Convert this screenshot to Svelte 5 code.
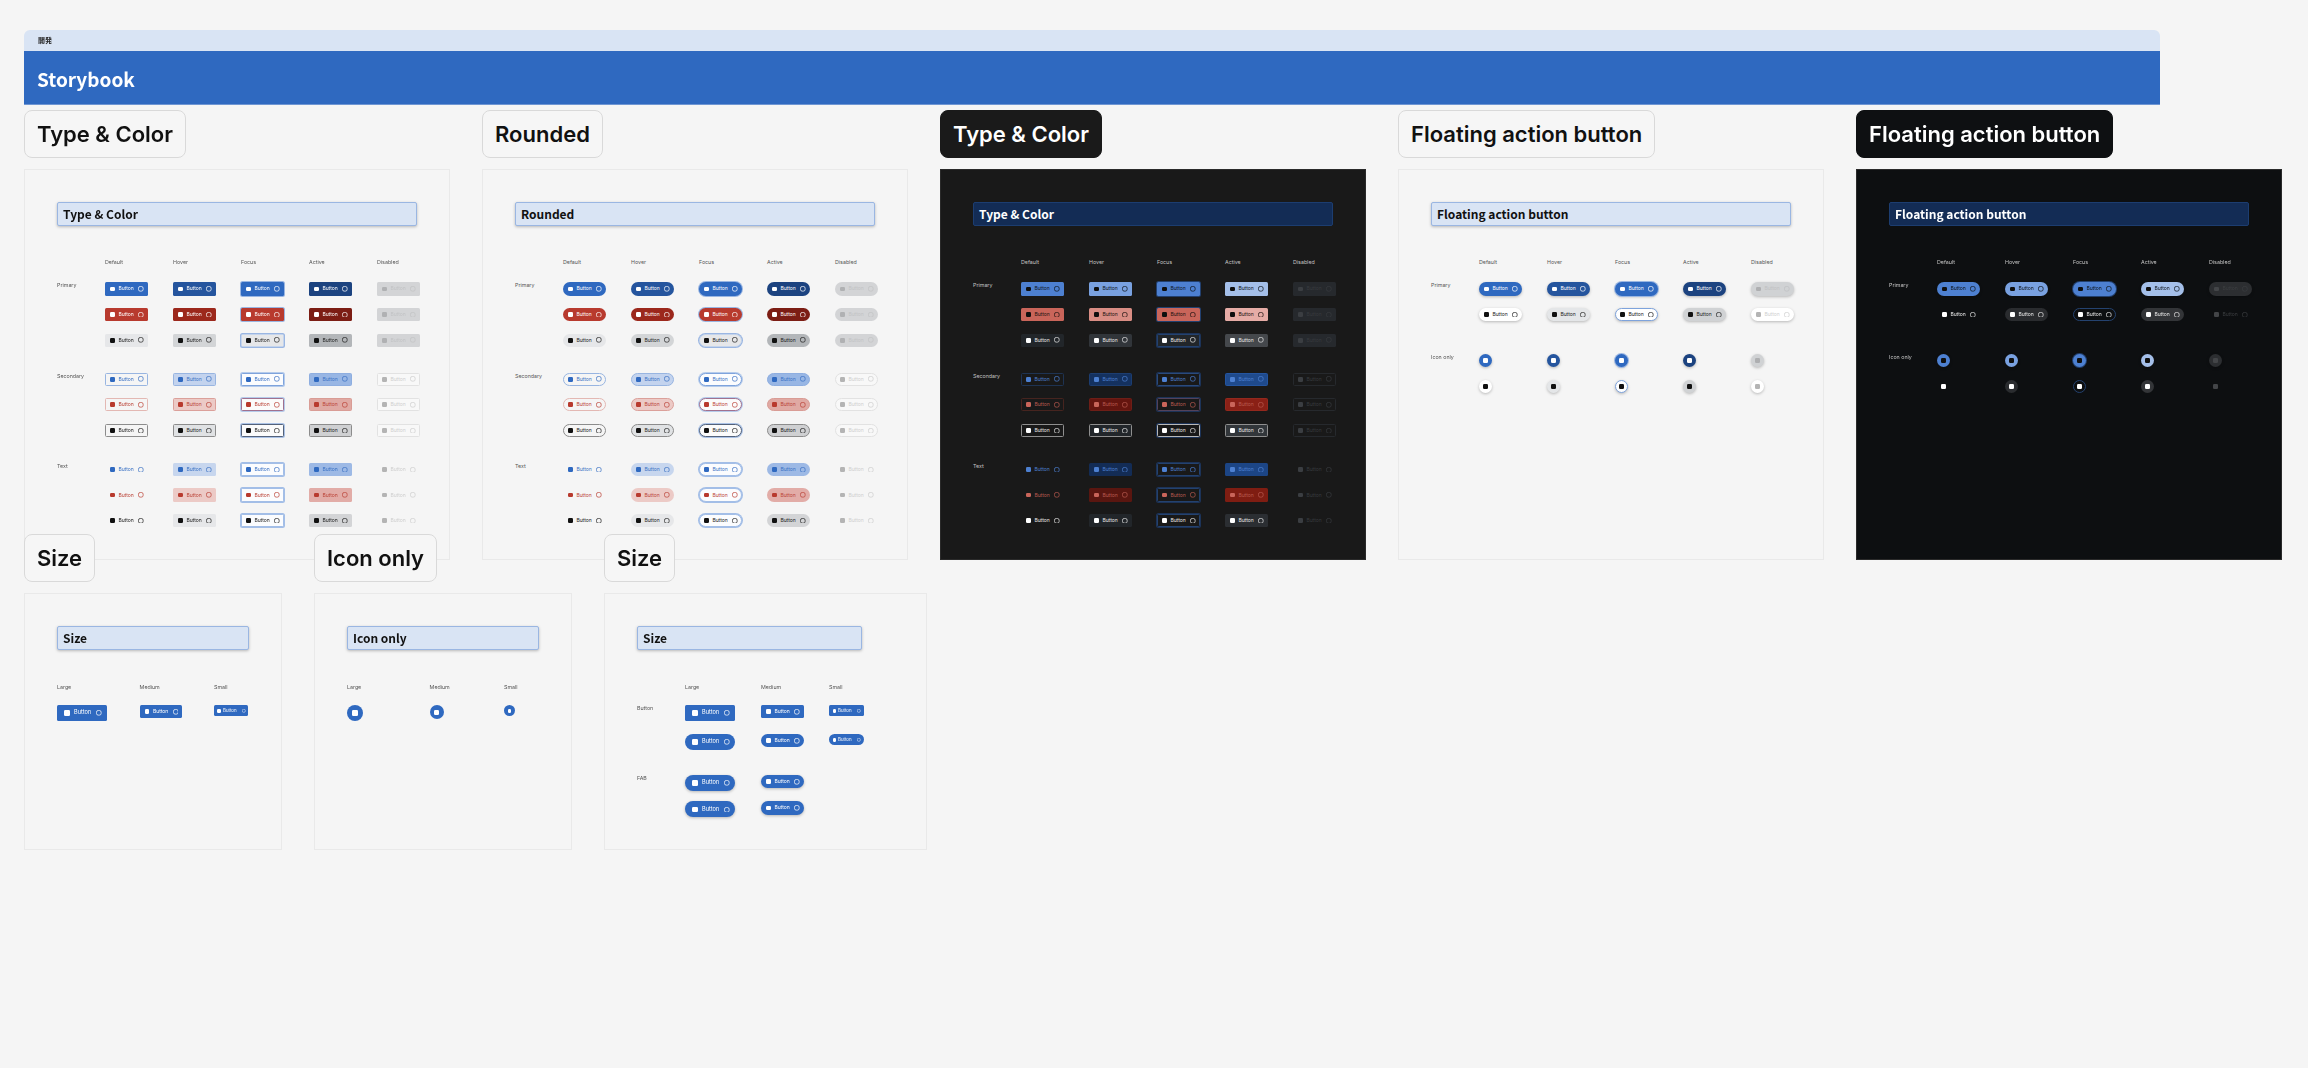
<script>
  const states = ["default", "hover", "focus", "active", "disabled"];
  const labels = { default: "Default", hover: "Hover", focus: "Focus", active: "Active", disabled: "Disabled" };

  const matrixRows = [
    { label: "Primary", kind: "solid-blue", start: true },
    { kind: "solid-red" },
    { kind: "solid-gray" },
    { label: "Secondary", kind: "line-blue", start: true },
    { kind: "line-red" },
    { kind: "line-gray" },
    { label: "Text", kind: "text-blue", start: true },
    { kind: "text-red" },
    { kind: "text-gray" },
  ];

  const fabRows = [
    { label: "Primary", kind: "fab-blue fab", start: true },
    { kind: "fab-white fab" },
    { label: "Icon only", kind: "fab-blue fab", icon: true, wide: true },
    { kind: "fab-white fab", icon: true },
  ];

  const boards = [
    { name: "Type & Color", rows: matrixRows, theme: "" },
    { name: "Rounded", rows: matrixRows, theme: "round" },
    { name: "Type & Color", rows: matrixRows, theme: "dark" },
    { name: "Floating action button", rows: fabRows, theme: "" },
    { name: "Floating action button", rows: fabRows, theme: "dark ink" },
  ];

  const sizes = ["Large", "Medium", "Small"];
</script>

{#snippet sample(kind, state, size = "md", icon = false)}
  {#if icon}
    <span class="btn icon {kind} {state} {size}"><i class="lead"></i></span>
  {:else}
    <span class="btn {kind} {state} {size}">
      <i class="lead"></i>
      <span>Button</span>
      <svg class="trail" viewBox="0 0 6 6"><rect x="0.5" y="0.5" width="5" height="5" rx="1.9" /></svg>
    </span>
  {/if}
{/snippet}

{#snippet heading(text)}
  <div class="title"><span>{text}</span></div>
{/snippet}

<div class="page">
  <header class="head">
    <div class="head__top">開発</div>
    <div class="head__main">Storybook</div>
  </header>

  <div class="row">
    {#each boards as board}
      <section class="col {board.theme}">
        <h2 class="tag">{board.name}</h2>
        <div class="frame">
          {@render heading(board.name)}
          <div class="matrix">
            <span></span>
            {#each states as state}
              <span class="label head-label">{labels[state]}</span>
            {/each}
            {#each board.rows as row, i}
              <span class="label row-label" class:start={row.start && i > 0} class:wide={row.wide}>{row.label ?? ""}</span>
              {#each states as state}
                <div class="cell" class:start={row.start && i > 0} class:wide={row.wide}>
                  {@render sample(row.kind, state, "md", row.icon)}
                </div>
              {/each}
            {/each}
          </div>
        </div>
      </section>
    {/each}
  </div>

  <div class="row row--second">
    <section class="col">
      <h2 class="tag">Size</h2>
      <div class="frame frame--small">
        {@render heading("Size")}
        <div class="sizes">
          {#each sizes as size}
            <span class="label size-label">{size}</span>
          {/each}
          {@render sample("solid-blue", "default", "lg")}
          {@render sample("solid-blue", "default", "md")}
          {@render sample("solid-blue", "default", "sm")}
        </div>
      </div>
    </section>

    <section class="col">
      <h2 class="tag">Icon only</h2>
      <div class="frame frame--small">
        {@render heading("Icon only")}
        <div class="sizes">
          {#each sizes as size}
            <span class="label size-label">{size}</span>
          {/each}
          {@render sample("solid-blue round-icon", "default", "lg", true)}
          {@render sample("solid-blue round-icon", "default", "md", true)}
          {@render sample("solid-blue round-icon", "default", "sm", true)}
        </div>
      </div>
    </section>

    <section class="col">
      <h2 class="tag">Size</h2>
      <div class="frame frame--wide">
        {@render heading("Size")}
        <div class="size-table">
          <span></span>
          {#each sizes as size}
            <span class="label size-label">{size}</span>
          {/each}

          <span class="label">Button</span>
          {@render sample("solid-blue", "default", "lg")}
          {@render sample("solid-blue", "default", "md")}
          {@render sample("solid-blue", "default", "sm")}

          <span></span>
          {@render sample("solid-blue pill", "default", "lg")}
          {@render sample("solid-blue pill", "default", "md")}
          {@render sample("solid-blue pill", "default", "sm")}

          <span class="label fab-start">FAB</span>
          <div class="cell fab-start">{@render sample("fab-blue fab", "default", "lg")}</div>
          <div class="cell fab-start">{@render sample("fab-blue fab", "default", "md")}</div>
          <span class="fab-start"></span>

          <span></span>
          {@render sample("fab-blue fab", "default", "lg")}
          {@render sample("fab-blue fab", "default", "md")}
          <span></span>
        </div>
      </div>
    </section>
  </div>
</div>

<style>
  :global(body) {
    background: #f5f5f5;
  }

  .page {
    padding: 30px 0 0 24px;
    font-family: Inter, "Noto Sans", sans-serif;
    filter: blur(0.35px);
  }

  .head {
    width: 2136px;
    font-family: "Noto Sans CJK JP", sans-serif;
  }

  .head__top {
    height: 21px;
    padding-left: 14px;
    background: #d9e4f4;
    border-radius: 6px 6px 0 0;
    font-size: 7px;
    font-weight: 700;
    line-height: 21px;
    color: #222;
  }

  .head__main {
    height: 53px;
    padding-left: 13px;
    background: #2f69c0;
    border-bottom: 1px solid #6f96d3;
    font-size: 19px;
    font-weight: 700;
    line-height: 55px;
    color: #fff;
  }

  .row {
    display: flex;
    gap: 32px;
    align-items: stretch;
    margin-top: 5px;
  }

  /* the second row's tags sit over the bottom edge of the first row */
  .row--second {
    margin-top: -26.5px;
  }

  .col {
    display: flex;
    flex-direction: column;
    align-items: flex-start;
  }

  .tag {
    margin: 0 0 11px;
    padding: 0 12px;
    height: 48px;
    box-sizing: border-box;
    background: #f6f6f6;
    border: 1px solid #d9d9d9;
    border-radius: 8px;
    font-size: 22px;
    font-weight: 600;
    line-height: 46px;
    color: #111;
  }

  .frame {
    flex: 1;
    width: 426px;
    box-sizing: border-box;
    padding: 32px;
    background: #f5f5f5;
    border: 1px solid #e9e9e9;
  }

  .frame--small {
    width: 258px;
  }

  .frame--wide {
    width: 323px;
    padding-right: 64px;
  }

  .title {
    height: 24px;
    box-sizing: border-box;
    padding-left: 5px;
    background: #d9e4f4;
    border: 1px solid #9ab6e2;
    border-radius: 2px;
    box-shadow: 0 1px 3px rgba(0, 0, 0, 0.25);
    font-family: "Noto Sans CJK JP", sans-serif;
    font-size: 12px;
    font-weight: 700;
    line-height: 21px;
    color: #111;
  }

  .label {
    font-size: 5.3px;
    line-height: 7px;
    color: #555;
    white-space: nowrap;
  }

  .matrix {
    display: grid;
    grid-template-columns: 48px repeat(4, 68px) auto;
    row-gap: 12.4px;
    margin-top: 33px;
    justify-items: start;
  }

  .head-label {
    margin-bottom: 4px;
  }

  .cell {
    display: flex;
    height: 13.2px;
  }

  .start {
    margin-top: 13.5px;
  }

  .wide {
    margin-top: 20.4px;
  }

  .sizes {
    display: grid;
    grid-template-columns: 82.6px 74.4px auto;
    row-gap: 13px;
    margin-top: 34px;
    justify-items: start;
    align-items: start;
  }

  .size-table {
    display: grid;
    grid-template-columns: 48px 76px 68px auto;
    row-gap: 13px;
    margin-top: 34px;
    justify-items: start;
    align-items: start;
  }

  .size-label {
    margin-bottom: 1.5px;
  }

  .fab-start {
    margin-top: 12px;
  }

  /* button */
  .btn {
    display: inline-flex;
    align-items: center;
    box-sizing: border-box;
    height: 13.2px;
    width: 42.5px;
    padding: 0 4px 0 5px;
    gap: 3.6px;
    background: var(--bg, transparent);
    color: var(--fg);
    border: 1px solid var(--bd, transparent);
    border-radius: 1.5px;
    font-size: 5px;
    line-height: 1;
    box-shadow: var(--sh, none);
    white-space: nowrap;
  }

  .btn > span {
    flex: 1;
  }

  .lead {
    flex: none;
    width: 4.8px;
    height: 4.8px;
    margin-left: -1px;
    border-radius: 1.2px;
    background: var(--ic, var(--fg));
  }

  .trail {
    flex: none;
    width: 5.6px;
    height: 5.6px;
    margin-right: -1px;
    fill: none;
    stroke: var(--fg);
    stroke-width: 0.8;
  }

  .round .btn,
  .pill,
  .fab {
    border-radius: 99px;
  }

  .lg {
    height: 16px;
    width: 50px;
    padding: 0 5px 0 7px;
    gap: 4.4px;
    font-size: 5.6px;
  }

  .lg .lead,
  .lg .trail {
    width: 5.6px;
    height: 5.6px;
  }

  .sm {
    height: 11px;
    width: 34.5px;
    padding: 0 2.5px 0 3.5px;
    gap: 2px;
    font-size: 4.4px;
  }

  .sm .lead,
  .sm .trail {
    width: 3.6px;
    height: 3.6px;
  }

  .icon {
    width: 13.2px;
    padding: 0;
    justify-content: center;
    border-radius: 50%;
  }

  .icon .lead {
    margin: 0;
  }

  .round-icon {
    border-radius: 50%;
  }

  .icon.lg {
    width: 16px;
    padding: 0;
  }

  .icon.md {
    width: 13.2px;
  }

  .icon.sm {
    width: 11px;
    padding: 0;
  }

  .sizes .icon.md {
    width: 14px;
    height: 14px;
  }

  /* light theme */
  .solid-blue { --bg: #2f69c0; --fg: #fff; }
  .solid-blue.hover { --bg: #25559e; }
  .solid-blue.focus { --sh: 0 0 0 1px #9ab6e2; }
  .solid-blue.active { --bg: #1c4380; }

  .solid-red { --bg: #b83a2e; --fg: #fff; }
  .solid-red.hover { --bg: #9c281c; }
  .solid-red.focus { --sh: 0 0 0 1px #9ab6e2; }
  .solid-red.active { --bg: #7c1d14; }

  .solid-gray { --bg: #e6e7e9; --fg: #222; --ic: #111; }
  .solid-gray.hover { --bg: #d3d5d7; }
  .solid-gray.focus { --sh: 0 0 0 1px #9ab6e2; --bd: #c4d4ec; }
  .solid-gray.active { --bg: #b3b6b9; }

  .line-blue { --bd: #98b5e1; --fg: #3b72c4; --ic: #2f69c0; }
  .line-blue.hover { --bg: #c3d3ee; }
  .line-blue.focus { --bg: #fbfcfe; --bd: #7ea3dc; --sh: 0 0 0 1px #b5cbeb; }
  .line-blue.active { --bg: #98b6e4; --bd: #8eaee0; }

  .line-red { --bd: #e3b8b3; --fg: #bb4438; --ic: #b83a2e; }
  .line-red.hover { --bg: #eccac6; --bd: #dba09a; }
  .line-red.focus { --bg: #fbfbfb; --bd: #a0718f; --sh: 0 0 0 1px #b5cbeb; }
  .line-red.active { --bg: #e0a9a3; --bd: #d99c95; }

  .line-gray { --bd: #8c8c8c; --fg: #222; --ic: #111; }
  .line-gray.hover { --bg: #e0e2e4; }
  .line-gray.focus { --bg: #fbfbfb; --bd: #54627a; --sh: 0 0 0 1px #aac2e6; }
  .line-gray.active { --bg: #cfd0d2; }

  .text-blue { --fg: #3b72c4; --ic: #2f69c0; }
  .text-blue.hover { --bg: #c7d6ee; }
  .text-blue.active { --bg: #9db9e5; }

  .text-red { --fg: #bb4438; --ic: #b83a2e; }
  .text-red.hover { --bg: #eccac6; }
  .text-red.active { --bg: #e2aca7; }

  .text-gray { --fg: #222; --ic: #111; }
  .text-gray.hover { --bg: #e6e7e9; }
  .text-gray.active { --bg: #d3d4d6; }

  .text-blue.focus,
  .text-red.focus,
  .text-gray.focus {
    --bg: #fbfcfe;
    --bd: #a3bee7;
    --sh: 0 0 0 1px #a3bee7;
  }

  .fab {
    --sh: 0 1px 3px rgba(0, 0, 0, 0.25);
  }

  .fab-blue { --bg: #2f69c0; --fg: #fff; }
  .fab-blue.hover { --bg: #25559e; }
  .fab-blue.focus { --sh: 0 0 0 1px #9ab6e2, 0 1px 3px rgba(0, 0, 0, 0.25); }
  .fab-blue.active { --bg: #1c4380; }

  .fab-white { --bg: #fff; --fg: #222; --ic: #111; }
  .fab-white.hover { --bg: #e4e6e8; }
  .fab-white.focus { --bd: #7ea3dc; }
  .fab-white.active { --bg: #d0d2d4; }

  .disabled[class*="solid-"] { --bg: #d3d4d6; --fg: #c2c3c5; --ic: #b0b1b3; }
  .disabled[class*="line-"] { --bg: #f8f8f8; --bd: #e2e2e2; --fg: #cfcfcf; --ic: #b4b4b4; }
  .disabled[class*="text-"] { --fg: #cfcfcf; --ic: #b4b4b4; }
  .disabled.fab-blue { --bg: #d0d2d4; --fg: #c0c1c3; --ic: #aeafb1; }
  .disabled.fab-white { --fg: #cfcfcf; --ic: #b4b4b4; }

  /* dark theme */
  .dark .tag {
    background: #1a1a1a;
    border-color: #1a1a1a;
    color: #fff;
  }

  .dark .frame {
    background: #191919;
    border-color: #2a2a2a;
  }

  .dark .title {
    background: #132c55;
    border-color: #1c3d70;
    box-shadow: none;
    color: #fff;
  }

  .dark .label {
    color: #c4c4c4;
  }

  .ink .tag {
    background: #0e1012;
    border-color: #0e1012;
  }

  .ink .frame {
    background: #0d0f11;
  }

  .dark .solid-blue { --bg: #4d80d1; --fg: #10151c; --ic: #0f0f0f; }
  .dark .solid-blue.hover { --bg: #79a1e0; }
  .dark .solid-blue.focus { --sh: 0 0 0 1px #22406f; }
  .dark .solid-blue.active { --bg: #a4bfe9; }

  .dark .solid-red { --bg: #c9655a; --fg: #1c1210; --ic: #0f0f0f; }
  .dark .solid-red.hover { --bg: #d98d84; }
  .dark .solid-red.focus { --sh: 0 0 0 1px #22406f; }
  .dark .solid-red.active { --bg: #e6aca6; }

  .dark .solid-gray { --bg: #22262a; --fg: #e8e8e8; --ic: #fff; }
  .dark .solid-gray.hover { --bg: #31353a; }
  .dark .solid-gray.focus { --bg: #22262a; --bd: #24426f; --sh: 0 0 0 1px #1c3358; }
  .dark .solid-gray.active { --bg: #45484c; }

  .dark .line-blue { --bd: #1e3352; --fg: #4d80d1; --ic: #4d80d1; }
  .dark .line-blue.hover { --bg: #14315f; --bd: #1c3d70; }
  .dark .line-blue.focus { --bg: transparent; --bd: #2a4a7c; --sh: 0 0 0 1px #1c3358; }
  .dark .line-blue.active { --bg: #1f4a8c; --bd: #2455a0; }

  .dark .line-red { --bd: #46241f; --fg: #b85a50; --ic: #c9655a; }
  .dark .line-red.hover { --bg: #65150f; --bd: #6e1e17; }
  .dark .line-red.focus { --bg: transparent; --bd: #54425a; --sh: 0 0 0 1px #1c3358; }
  .dark .line-red.active { --bg: #8a2016; --bd: #94281d; }

  .dark .line-gray { --bd: #8f8f8f; --fg: #e8e8e8; --ic: #fff; }
  .dark .line-gray.hover { --bg: #22262a; }
  .dark .line-gray.focus { --bg: transparent; --bd: #b8b8b8; --sh: 0 0 0 1px #1c3358; }
  .dark .line-gray.active { --bg: #32363a; }

  .dark .text-blue { --fg: #4d80d1; --ic: #4d80d1; }
  .dark .text-blue.hover { --bg: #132c55; }
  .dark .text-blue.active { --bg: #1c4585; }

  .dark .text-red { --fg: #b85a50; --ic: #c9655a; }
  .dark .text-red.hover { --bg: #5a1610; }
  .dark .text-red.active { --bg: #7f1d12; }

  .dark .text-gray { --fg: #e8e8e8; --ic: #fff; }
  .dark .text-gray.hover { --bg: #22262a; }
  .dark .text-gray.active { --bg: #2b2e32; }

  .dark .text-blue.focus,
  .dark .text-red.focus,
  .dark .text-gray.focus {
    --bg: transparent;
    --bd: #24426f;
    --sh: 0 0 0 1px #1c3358;
  }

  .dark .fab-blue { --bg: #4d80d1; --fg: #10151c; --ic: #0f0f0f; }
  .dark .fab-blue.hover { --bg: #79a1e0; }
  .dark .fab-blue.focus { --sh: 0 0 0 1px #22406f; }
  .dark .fab-blue.active { --bg: #a4bfe9; }

  .dark .fab-white { --bg: transparent; --fg: #e8e8e8; --ic: #fff; --sh: none; }
  .dark .fab-white.hover { --bg: #2a2c2f; }
  .dark .fab-white.focus { --bd: #24426f; }
  .dark .fab-white.active { --bg: #333538; }

  .dark .disabled[class*="solid-"] { --bg: #26292d; --fg: #383b3f; --ic: #3b3e42; }
  .dark .disabled[class*="line-"] { --bg: transparent; --bd: #26292d; --fg: #383b3f; --ic: #3b3e42; }
  .dark .disabled[class*="text-"] { --fg: #383b3f; --ic: #3b3e42; }
  .dark .disabled.fab-blue { --bg: #2c2e31; --fg: #3c3e41; --ic: #434548; }
  .dark .disabled.fab-white { --bg: transparent; --fg: #3c3e41; --ic: #434548; }
</style>
